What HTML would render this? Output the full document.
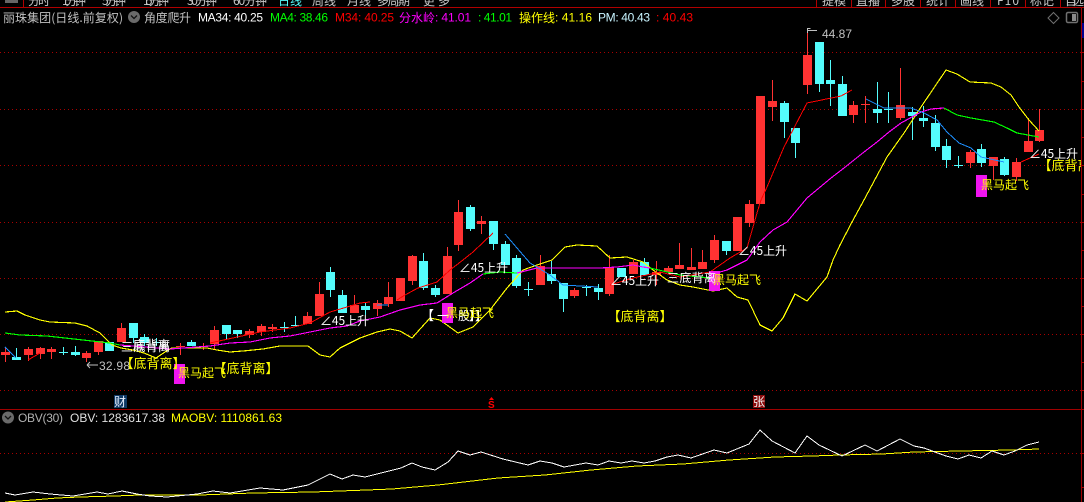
<!DOCTYPE html>
<html lang="zh"><head><meta charset="utf-8"><title>丽珠集团</title>
<style>
html,body{margin:0;padding:0;background:#000;width:1084px;height:502px;overflow:hidden}
svg{display:block}
text{font-family:"Liberation Sans","WenQuanYi Zen Hei","Noto Sans CJK SC",sans-serif;font-size:12px}
.c{font-family:"WenQuanYi Zen Hei","Noto Sans CJK SC",sans-serif;font-size:12px}
.b{font-family:"WenQuanYi Zen Hei","Noto Sans CJK SC",sans-serif;font-size:13px}
.l{fill:none;shape-rendering:crispEdges;stroke-width:1.150}
.t{fill:none;shape-rendering:crispEdges;stroke-width:1}
.y{fill:#ffff00}.w{fill:#fff}
</style></head><body>
<svg width="1084" height="502" viewBox="0 0 1084 502" xmlns="http://www.w3.org/2000/svg">
<rect width="1084" height="502" fill="#000"/>
<!-- toolbar -->
<g fill="#c8c8c8" class="tb">
<text class="c" x="28" y="5" textLength="22">分时</text>
<text class="c" x="62" y="5" textLength="24">1分钟</text>
<text class="c" x="102" y="5" textLength="24">5分钟</text>
<text class="c" x="143" y="5" textLength="26">15分钟</text>
<text class="c" x="187" y="5" textLength="30">30分钟</text>
<text class="c" x="233" y="5" textLength="34">60分钟</text>
<text class="c" x="278" y="5" textLength="24" fill="#54fcfc">日线</text>
<text class="c" x="312" y="5" textLength="24">周线</text>
<text class="c" x="347" y="5" textLength="24">月线</text>
<text class="c" x="377" y="5" textLength="33">多周期</text>
<text class="c" x="423" y="5" textLength="27">更多</text>
<text class="c" x="822" y="5" textLength="24">提模</text>
<text class="c" x="856" y="5" textLength="24">直播</text>
<text class="c" x="891" y="5" textLength="24">多股</text>
<text class="c" x="926" y="5" textLength="24">统计</text>
<text class="c" x="960" y="5" textLength="24">画线</text>
<text class="c" x="997" y="5" textLength="22">F10</text>
<text class="c" x="1030" y="5" textLength="24">标记</text>
<text class="c" x="1065" y="5" textLength="19">自选</text>
</g>
<rect x="5" y="0" width="13" height="3" fill="#666"/>
<path d="M0 7.500H1084M23.500 0V7M816.500 0V7M851.500 0V7M885.500 0V7M920.500 0V7M955.500 0V7M990.500 0V7M1025.500 0V7M1060.500 0V7" stroke="#b00000" fill="none"/>
<!-- grid -->
<path d="M0 52.500H1081M0 109.500H1081M0 165.500H1081M0 222.500H1081M0 278.500H1081M0 334.500H1081M0 390.500H1081M0 453.500H1081" stroke="#a80000" stroke-dasharray="1 3" fill="none"/>
<path d="M0 409.500H1084" stroke="#a00000" fill="none"/>
<!-- icons -->
<path d="M1053.500 12.500l5.500 5.500-5.500 5.500-5.500-5.500z" fill="none" stroke="#707070"/>
<rect x="1066.500" y="12.500" width="11" height="10" rx="1.500" fill="#000" stroke="#707070" stroke-width="1.500"/>
<rect x="1072" y="14" width="4" height="7" fill="#8a8a8a"/>
<circle cx="134" cy="17" r="6" fill="#6a6a6a"/><path d="M131 15.500l3 3 3-3" stroke="#111" stroke-width="1.300" fill="none"/>
<circle cx="8" cy="417.500" r="6" fill="#6a6a6a"/><path d="M5 416l3 3 3-3" stroke="#111" stroke-width="1.300" fill="none"/>
<!-- candles wicks -->
<path shape-rendering="crispEdges" fill="none" stroke="#ff3232" d="M5.500 347V362M28.500 347V361M40.500 347V359M51.500 347V359M86.500 351V362M98.500 341V355M121.500 323V342M180.500 343V355M203.500 343V350M214.500 326V350M249.500 329V338M261.500 324V336M272.500 324V332M307.500 312V324M319.500 282V316M354.500 295V313M377.500 300V316M388.500 282V307M400.500 278V301M412.500 255V285M447.500 247V294M458.500 200V251M481.500 216V234M540.500 255V285M574.500 288V298M609.500 255V296M633.500 260V274M656.500 261V285M668.500 266V272M679.500 243V269M691.500 248V270M702.500 250V269M714.500 235V263M737.500 217V251M749.500 200V227M760.500 96V204M772.500 80V121M807.500 30V94M853.500 101V123M865.500 96V123M900.500 68V120M970.500 150V168M993.500 157V180M1016.500 158V181M1028.500 118V152M1039.500 109V142"/>
<path shape-rendering="crispEdges" fill="none" stroke="#54fcfc" d="M16.500 348V360M63.500 347V355M75.500 346V356M133.500 323V343M144.500 334V346M156.500 338V346M191.500 340V346M226.500 325V340M237.500 330V338M284.500 322V332M295.500 316V326M330.500 267V297M342.500 290V313M365.500 302V315M423.500 253V290M435.500 285V297M470.500 205V231M493.500 221V250M505.500 241V265M516.500 255V288M528.500 282V296M551.500 261V284M563.500 283V312M586.500 285V296M598.500 284V300M644.500 258V275M726.500 241V255M784.500 101V138M795.500 128V158M819.500 42V92M830.500 60V106M842.500 76V116M877.500 82V123M888.500 92V123M912.500 107V140M923.500 106V127M935.500 115V151M946.500 139V168M958.500 156V168M981.500 144V167M1004.500 157V176"/>
<!-- bodies -->
<path shape-rendering="crispEdges" fill="#ff3232" d="M1 352h9v3h-9zM24 349h9v6h-9zM36 348h9v6h-9zM47 349h9v3h-9zM82 353h9v5h-9zM94 341h9v11h-9zM117 328h9v14h-9zM176 346h9v1h-9zM199 346h9v1h-9zM210 330h9v14h-9zM245 331h9v4h-9zM257 326h9v6h-9zM268 327h9v2h-9zM303 316h9v8h-9zM315 294h9v22h-9zM350 305h9v8h-9zM373 303h9v6h-9zM384 297h9v7h-9zM396 278h9v23h-9zM408 256h9v25h-9zM443 256h9v38h-9zM454 212h9v33h-9zM477 221h9v3h-9zM536 266h9v19h-9zM570 290h9v6h-9zM605 268h9v26h-9zM629 262h9v12h-9zM652 272h9v3h-9zM664 268h9v4h-9zM675 265h9v4h-9zM687 267h9v3h-9zM698 262h9v7h-9zM710 240h9v20h-9zM733 217h9v34h-9zM745 204h9v19h-9zM756 96h9v108h-9zM768 101h9v6h-9zM803 55h9v30h-9zM849 105h9v10h-9zM861 104h9v1h-9zM896 105h9v13h-9zM966 152h9v11h-9zM989 157h9v9h-9zM1012 162h9v15h-9zM1024 141h9v11h-9zM1035 130h9v11h-9z"/>
<path shape-rendering="crispEdges" fill="#54fcfc" d="M12 357h9v3h-9zM59 352h9v1h-9zM71 352h9v3h-9zM105 342h9v9h-9zM129 323h9v15h-9zM140 337h9v6h-9zM152 342h9v1h-9zM187 342h9v4h-9zM222 325h9v9h-9zM233 330h9v4h-9zM280 327h9v1h-9zM291 325h9v1h-9zM326 272h9v18h-9zM338 295h9v18h-9zM361 306h9v4h-9zM419 261h9v27h-9zM431 288h9v7h-9zM466 207h9v22h-9zM489 221h9v23h-9zM501 244h9v21h-9zM512 258h9v28h-9zM524 289h9v1h-9zM547 274h9v7h-9zM559 283h9v16h-9zM582 287h9v1h-9zM594 288h9v4h-9zM617 268h9v9h-9zM640 262h9v13h-9zM722 241h9v10h-9zM780 103h9v19h-9zM791 128h9v15h-9zM815 42h9v42h-9zM826 80h9v4h-9zM838 84h9v32h-9zM873 109h9v4h-9zM884 109h9v1h-9zM908 112h9v4h-9zM919 118h9v3h-9zM931 123h9v24h-9zM942 146h9v14h-9zM954 165h9v1h-9zM977 149h9v14h-9zM1000 159h9v16h-9z"/>
<!-- yellow band -->
<polyline class="l" stroke="#ffff00" points="5,312 17,311 25,315 40,320 50,322 75,323 87,326 100,333 112,345 121,348 133,350 144,353 156,358 168,350 172,348 207,348 217,350 230,352 243,351 263,349 280,346 308,346 320,355 330,357 340,348 360,338 377,332 390,329 400,331 412,338 430,318 440,320 458,333 473,327 490,310 507,288 523,270 537,265 552,260 565,247 577,245 597,246 610,258 627,257 643,262 653,270 667,280 680,285 693,287 713,291 727,288 737,297 748,300 760,325 772,331 783,318 795,294 807,301 827,277 833,260 840,245 852,222 864,200 887,157 904,133 921,107 946,70 957,74 970,82 991,83 1001,87 1011,95 1019,107 1029,120 1039,131"/>
<!-- divide line -->
<polyline class="l" stroke="#00ff00" points="5,333 20,335 47,336 83,340 110,343 120,345"/>
<polyline class="l" stroke="#ff00ff" points="120,345 170,349 210,346 230,343 250,342 270,338 290,336 310,332 330,328 347,326 360,321 380,317 400,310 420,305 437,303 453,293 470,283 483,274"/>
<polyline class="l" stroke="#00ff00" points="483,274 500,272 517,273"/>
<polyline class="l" stroke="#ff00ff" points="517,273 537,268 573,268 600,268 617,267 633,265 643,267 650,268"/>
<polyline class="l" stroke="#00ff00" points="650,268 680,275 710,278"/>
<polyline class="l" stroke="#ff00ff" points="710,278 720,272 727,270 747,260 760,242 773,230 787,222 807,198 831,178 844,168 864,152 877,142 889,132 901,123 921,112 931,109 944,108"/>
<polyline class="l" stroke="#00ff00" points="944,108 957,115 971,118 994,122 1007,128 1017,133 1039,137"/>
<!-- fast line -->
<polyline class="t" stroke="#1e90ff" points="5,347 16,358"/>
<polyline class="t" stroke="#ff0000" points="28,360 40,353"/>
<polyline class="t" stroke="#ff0000" points="210,343 260,332 290,328 310,323 330,312 347,307 360,303 370,302"/>
<polyline class="t" stroke="#1e90ff" points="377,305 388,305"/>
<polyline class="t" stroke="#ff0000" points="397,300 405,295 418,288 437,282 450,270 463,260 473,252 493,233"/>
<polyline class="t" stroke="#1e90ff" points="505,234 517,248 530,263 550,275 563,285 598,287"/>
<polyline class="t" stroke="#ff0000" points="610,285 633,278 660,272 680,277 710,272 730,258 747,248 757,213 761,200 767,187 784,147 807,103 841,96 852,90"/>
<polyline class="t" stroke="#1e90ff" points="866,99 884,108 911,108 924,113 937,120 947,132 959,143 971,148 981,157 1004,162"/>
<polyline class="t" stroke="#ff0000" points="1021,162 1039,154"/>
<!-- magenta blocks -->
<g fill="#f014f0">
<rect x="174" y="364" width="11" height="20"/><rect x="442" y="303" width="11" height="20"/><rect x="709" y="271" width="11" height="20"/><rect x="976" y="175" width="11" height="22"/>
</g>
<!-- hi / lo -->
<path d="M807.500 28V33M807.500 28.500h3M808 30.500H817" stroke="#c0c0c0" fill="none" shape-rendering="crispEdges"/>
<text x="822" y="38" fill="#c0c0c0" textLength="30">44.87</text>
<path d="M87 365H98M87 365l3-3M87 365l3 3" stroke="#c0c0c0" fill="none"/>
<text x="99" y="370" fill="#c0c0c0" textLength="31">32.98</text>
<!-- labels -->
<g class="w">
<text class="c" x="320" y="325" textLength="49">∠45上升</text>
<text class="c" x="459" y="272" textLength="49">∠45上升</text>
<text class="c" x="610" y="285" textLength="49">∠45上升</text>
<text class="c" x="738" y="255" textLength="49">∠45上升</text>
<text class="c" x="1029" y="158" textLength="49">∠45上升</text>
<text class="c" x="121" y="351" textLength="49">三底背离</text>
<text class="c" x="133" y="349" textLength="37">底背离</text>
<text class="c" x="667" y="282" textLength="49">三底背离</text>
<text class="b" x="421" y="320">【</text>
<text class="c" x="437" y="320">一</text>
<text class="c" x="458" y="320">股</text>
<text class="c" x="469" y="320">】】</text>
</g>
<g class="y">
<text class="b" x="120.500" y="368">【底背离】</text>
<text class="b" x="213.500" y="373">【底背离】</text>
<text class="b" x="607.500" y="321">【底背离】</text>
<text class="b" x="1038.500" y="170">【底背离】</text>
<text class="c" x="178" y="377" textLength="48">黑马起飞</text>
<text class="c" x="446" y="317" textLength="48">黑马起飞</text>
<text class="c" x="713" y="284" textLength="48">黑马起飞</text>
<text class="c" x="981" y="189" textLength="48">黑马起飞</text>
</g>
<!-- right axis drawn above labels -->
<rect x="1081" y="8" width="3" height="494" fill="#000"/>
<path d="M1081.500 7V502M1081 52.500H1084M1081 81.500H1084M1081 109.500H1084M1081 137.500H1084M1081 165.500H1084M1081 194.500H1084M1081 222.500H1084M1081 250.500H1084M1081 278.500H1084M1081 306.500H1084M1081 334.500H1084M1081 362.500H1084M1081 390.500H1084M1081 409.500H1084M1081 453.500H1084M1081 487.500H1084" stroke="#a00000" fill="none"/>
<rect x="1082" y="23" width="2" height="15" fill="#000090"/>
<!-- markers -->
<rect x="114" y="395" width="13" height="13" fill="#0f3a66"/>
<text class="c" x="114" y="406" fill="#e8f0ff" textLength="13">财</text>
<path d="M491.500 397l2.500 3h-5z" fill="#ff0000"/>
<text x="488" y="408" fill="#ff0000" style="font-size:10px;font-weight:bold">S</text>
<rect x="753" y="395" width="12" height="13" fill="#8c0c0c"/>
<text class="c" x="753" y="406" fill="#f0f0f0" textLength="12">张</text>
<!-- header -->
<text class="c" x="3" y="22" fill="#c0c0c0" textLength="120">丽珠集团(日线.前复权)</text>
<text class="c" x="144" y="22" fill="#c0c0c0" textLength="47">角度爬升</text>
<text x="198" y="21.500" fill="#fff" textLength="65">MA34: 40.25</text>
<text x="270" y="21.500" fill="#00ff00" textLength="58">MA4: 38.46</text>
<text x="335" y="21.500" fill="#ff0000" textLength="59">M34: 40.25</text>
<text class="c" x="399" y="22" fill="#ff00ff" textLength="36">分水岭</text>
<text x="435" y="21.500" fill="#ff00ff" textLength="36">: 41.01</text>
<text x="478" y="21.500" fill="#00ff00" textLength="34">: 41.01</text>
<text class="c" x="519" y="22" fill="#ffff00" textLength="36">操作线</text>
<text x="555" y="21.500" fill="#ffff00" textLength="37">: 41.16</text>
<text x="598" y="21.500" fill="#c8f4ff" textLength="52">PM: 40.43</text>
<text x="656" y="21.500" fill="#ff0000" textLength="37">: 40.43</text>
<text x="18" y="422" fill="#b0b0b0" textLength="45">OBV(30)</text>
<text x="70" y="422" fill="#e0e0e0" textLength="95">OBV: 1283617.38</text>
<text x="171" y="422" fill="#ffff00" textLength="111">MAOBV: 1110861.63</text>
<!-- OBV -->
<polyline class="t" stroke="#ffff00" points="5,502 33,500 57,498 80,497 115,496 140,495 200,495 253,493 313,492 367,490 392,489 438,485 498,478 545,475 591,470 637,466 683,464 729,460 775,457 812,456 840,455 882,454 914,452 960,451 1011,450 1039,449"/>
<polyline class="t" stroke="#ffffff" points="5,493 15,495 33,492 50,494 73,496 97,492 108,494 122,491 137,494 150,496 167,497 177,496 197,494 213,491 230,493 260,488 283,490 308,485 330,474 342,479 353,475 365,477 401,468 412,463 422,467 435,470 448,462 458,451 470,455 481,452 503,459 528,465 540,461 552,463 564,467 586,463 598,465 609,461 621,463 632,461 644,463 655,461 667,457 678,455 691,458 714,450 727,453 749,444 760,430 772,441 795,453 807,436 819,445 842,456 865,445 877,451 900,439 914,446 924,448 935,452 946,456 958,459 969,455 981,458 992,451 1004,455 1015,451 1027,445 1039,442"/>
</svg>
</body></html>
